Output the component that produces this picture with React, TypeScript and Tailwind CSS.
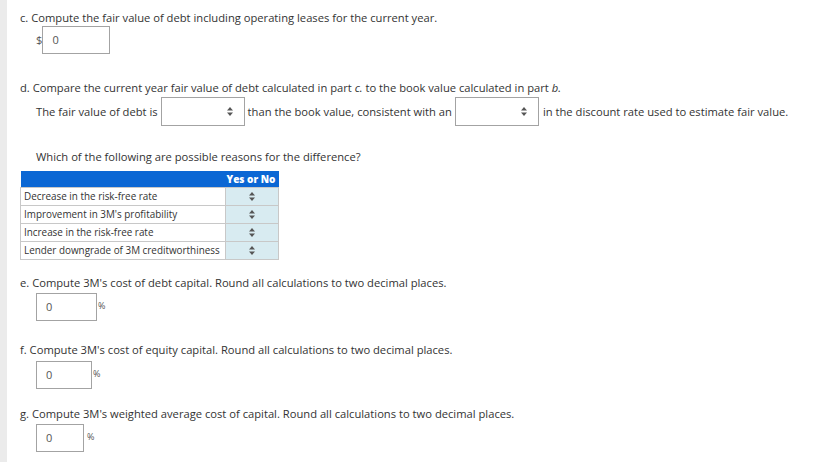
import React from "react";

const FONT = { fontFamily: '"Open Sans", "Liberation Sans", sans-serif' };

// tiny up/down arrows used by the select boxes
function Sorter() {
  return (
    <svg width="6" height="9" viewBox="0 0 6 9" className="shrink-0">
      <polygon points="3,0 6,3.5 0,3.5" fill="#555" />
      <polygon points="0,5.5 6,5.5 3,9" fill="#555" />
    </svg>
  );
}

function SelectBox() {
  return (
    <div className="flex h-[29px] w-[84px] items-center justify-end border border-[#a3a3a3] bg-white pr-[11px]">
      <Sorter />
    </div>
  );
}

function NumBox({ width }: { width: string }) {
  return (
    <div className={`flex h-[28px] ${width} items-center border border-[#a3a3a3] bg-white pl-[9px] text-[11px] text-[#555]`}>
      0
    </div>
  );
}

const ROWS = [
  "Decrease in the risk-free rate",
  "Improvement in 3M's profitability",
  "Increase in the risk-free rate",
  "Lender downgrade of 3M creditworthiness",
];

export default function App() {
  return (
    <div className="flex h-[462px] w-[821px] bg-white text-[#333]" style={FONT}>
      <div className="w-[7px] shrink-0 bg-[#ebebeb]" />
      <div className="flex flex-col pl-[13px] pt-[11px] text-[11.2px] leading-[14px]">
        {/* part c */}
        <div>c. Compute the fair value of debt including operating leases for the current year.</div>
        <div className="mt-[1px] flex items-center pl-[16px]">
          <span className="text-[#555]">$</span>
          <NumBox width="w-[68px]" />
        </div>

        {/* part d */}
        <div className="mt-[27px] whitespace-nowrap">
          d. Compare the current year fair value of debt calculated in part <i>c.</i> to the book value calculated in part <i>b.</i>
        </div>
        <div className="mt-[2px] flex items-center whitespace-nowrap pl-[16px]">
          <span className="mr-[3px]">The fair value of debt is</span>
          <SelectBox />
          <span className="mx-[3px]">than the book value, consistent with an</span>
          <SelectBox />
          <span className="ml-[4px]">in the discount rate used to estimate fair value.</span>
        </div>

        <div className="mt-[24px] pl-[16px]">Which of the following are possible reasons for the difference?</div>

        <table className="mt-[7px] w-[259px] border-collapse text-[9.9px] leading-[12px]">
          <thead>
            <tr className="h-[16px] bg-[#0b67d4]">
              <th className="w-[205px]" />
              <th className="pr-[3px] text-right text-[10px] font-extrabold text-white">Yes or No</th>
            </tr>
          </thead>
          <tbody>
            {ROWS.map((r) => (
              <tr key={r} className="h-[18px]">
                <td className="border border-[#c8c8c8] pl-[3px] text-left whitespace-nowrap">{r}</td>
                <td className="border border-[#c8c8c8] bg-[#d8ebf1]">
                  <div className="flex justify-center">
                    <Sorter />
                  </div>
                </td>
              </tr>
            ))}
          </tbody>
        </table>

        {/* part e */}
        <div className="mt-[16px]">e. Compute 3M's cost of debt capital. Round all calculations to two decimal places.</div>
        <div className="mt-[3px] flex items-start pl-[16px]">
          <NumBox width="w-[61px]" />
          <span className="ml-[1px] mt-[6px] text-[9px] text-[#555]">%</span>
        </div>

        {/* part f */}
        <div className="mt-[22px]">f. Compute 3M's cost of equity capital. Round all calculations to two decimal places.</div>
        <div className="mt-[4px] flex items-start pl-[16px]">
          <NumBox width="w-[56px]" />
          <span className="ml-[1px] mt-[6px] text-[9px] text-[#555]">%</span>
        </div>

        {/* part g */}
        <div className="mt-[18px]">g. Compute 3M's weighted average cost of capital. Round all calculations to two decimal places.</div>
        <div className="mt-[3px] flex items-start pl-[16px]">
          <NumBox width="w-[48px]" />
          <span className="ml-[3px] mt-[6px] text-[9px] text-[#555]">%</span>
        </div>
      </div>
    </div>
  );
}
